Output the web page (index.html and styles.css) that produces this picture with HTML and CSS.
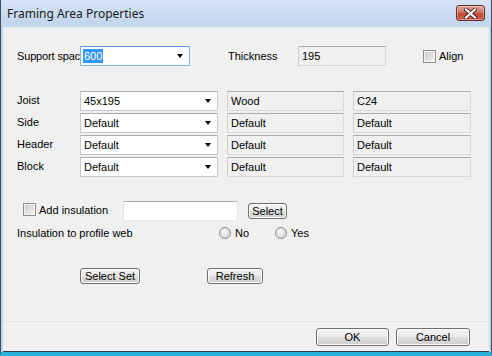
FILE: index.html
```html
<!DOCTYPE html>
<html lang="en">
<head>
  <meta charset="UTF-8" />
  <title>Framing Area Properties</title>
  <link rel="stylesheet" href="styles.css">
</head>
<body>

  <div class="window">
    <div class="titlebar">
      <span class="title">Framing Area Properties</span>
      <div class="close">
        <svg width="13" height="11" viewBox="0 0 13 11">
          <path d="M2 1.5L11 9.5M11 1.5L2 9.5" stroke="#4a2020" stroke-width="4" stroke-linecap="square"/>
          <path d="M2 1.5L11 9.5M11 1.5L2 9.5" stroke="#fff" stroke-width="2.2" stroke-linecap="square"/>
        </svg>
      </div>
    </div>

    <div class="client">
      <div class="form">

        <div class="row top-row">
          <span class="lbl first">Support spac</span>
          <div class="combo focus combo-short"><span class="sel">600</span><i class="arrow"></i></div>
          <span class="lbl thick">Thickness</span>
          <div class="box thick-box">195</div>
          <span class="cb align-cb"></span>
          <span class="lbl">Align</span>
        </div>

        <div class="grid">
          <span class="lbl">Joist</span>
          <div class="combo"><span>45x195</span><i class="arrow"></i></div>
          <div class="box">Wood</div>
          <div class="box">C24</div>

          <span class="lbl">Side</span>
          <div class="combo"><span>Default</span><i class="arrow"></i></div>
          <div class="box">Default</div>
          <div class="box">Default</div>

          <span class="lbl">Header</span>
          <div class="combo"><span>Default</span><i class="arrow"></i></div>
          <div class="box">Default</div>
          <div class="box">Default</div>

          <span class="lbl">Block</span>
          <div class="combo"><span>Default</span><i class="arrow"></i></div>
          <div class="box">Default</div>
          <div class="box">Default</div>
        </div>

        <div class="row ins-row">
          <span class="cb ins-cb"></span>
          <span class="lbl ins-lbl">Add insulation</span>
          <div class="edit"></div>
          <button class="btn select-btn">Select</button>
        </div>

        <div class="row web-row">
          <span class="lbl web-lbl">Insulation to profile web</span>
          <span class="radio-item no-item"><span class="radio"></span>No</span>
          <span class="radio-item"><span class="radio"></span>Yes</span>
        </div>

        <div class="row btn-row">
          <button class="btn set-btn">Select Set</button>
          <button class="btn refresh-btn">Refresh</button>
        </div>

      </div>

      <div class="footer">
        <button class="btn ok-btn">OK</button>
        <button class="btn cancel-btn">Cancel</button>
      </div>
    </div>
  </div>

</body>
</html>
```

FILE: styles.css
```css
* {
  box-sizing: border-box;
}

body {
  margin: 0;
  font-family: 'Liberation Sans', Arial, sans-serif;
  font-size: 11px;
  color: #000;
  background: #c0d3ec;
}

.window {
  width: 492px;
  height: 356px;
  display: flex;
  flex-direction: column;
  padding: 0 2px;
  border-left: 1px solid #3c4d63;
  border-right: 1px solid #3c4d63;
  border-bottom: 4px solid #29b3d9;
  background: linear-gradient(#d5e3f4, #c1d4ed 27px, #c1d4ed);
}

/* title bar */
.titlebar {
  height: 27px;
  display: flex;
  align-items: flex-start;
  flex-shrink: 0;
}

.title {
  font-family: 'Noto Sans', sans-serif;
  font-size: 12px;
  color: #1b1b1b;
  padding-left: 4px;
  line-height: 27px;
}

.close {
  margin-left: auto;
  margin-right: 4px;
  margin-top: 5px;
  width: 29px;
  height: 16px;
  border: 1px solid #6b2b2b;
  border-radius: 3px;
  background: linear-gradient(#e3a59b, #d0705f 50%, #c04a3a 51%, #c95a45);
  box-shadow: inset 0 0 0 1px rgba(255,255,255,0.35);
  display: flex;
  justify-content: center;
  align-items: center;
}

/* client area */
.client {
  flex: 1;
  display: flex;
  flex-direction: column;
  background: #f0f0f0;
  border-bottom: 1px solid #2c3a4c;
}

.form {
  flex: 1;
  padding: 19px 0 0 14px;
}

.row {
  display: flex;
  align-items: center;
}

.lbl {
  white-space: nowrap;
}

.top-row {
  height: 20px;
}

.first {
  width: 63px;
  letter-spacing: -0.15px;
}

.thick {
  margin-left: 38px;
  width: 70px;
}

.align-cb {
  margin-left: 37px;
  margin-right: 3px;
}

/* combos and boxes */
.combo {
  height: 20px;
  display: flex;
  align-items: center;
  padding: 0 6px 0 3px;
  background: #fff;
  border: 1px solid #c5c9d0;
  border-top-color: #abadb3;
}

.combo.focus {
  border-color: #7eb4ea;
  border-top-color: #569de5;
}

.combo-short {
  width: 110px;
}

.arrow {
  margin-left: auto;
  width: 1px;
  height: 0;
  border-left: 3px solid transparent;
  border-right: 3px solid transparent;
  border-top: 4px solid #000;
}

.sel {
  background: #3399ff;
  color: #fff;
  line-height: 14px;
  padding: 0 1px;
  margin-left: -1px;
}

.box {
  height: 20px;
  display: flex;
  align-items: center;
  padding-left: 3px;
  background: #f0f0f0;
  border: 1px solid #dadada;
  border-top-color: #adadad;
  border-left-color: #cfcfcf;
}

.thick-box {
  width: 88px;
}

.grid {
  margin-top: 25px;
  display: grid;
  grid-template-columns: 54px 138px 117px 118px;
  grid-auto-rows: 20px;
  column-gap: 9px;
  row-gap: 2px;
  align-items: center;
}

.grid .lbl {
  margin-top: -2px;
}

/* checkbox / radio */
.cb {
  width: 13px;
  height: 13px;
  border: 1px solid #8e8f8f;
  background: linear-gradient(135deg, #c8c8c8, #f6f6f6);
  box-shadow: inset 0 0 0 1px #f4f4f4;
  flex-shrink: 0;
}

.ins-row {
  margin-top: 24px;
  height: 20px;
}

.ins-cb {
  margin-left: 6px;
  margin-right: 3px;
  margin-top: -3px;
}

.ins-lbl {
  width: 84px;
  margin-top: -3px;
}

.edit {
  width: 115px;
  height: 20px;
  background: #fff;
  border: 1px solid #e3e9ef;
  border-top-color: #abadb3;
  border-left-color: #e2e3ea;
}

.web-row {
  margin-top: 5px;
  height: 13px;
}

.web-lbl {
  width: 202px;
}

.radio-item {
  display: flex;
  align-items: center;
  gap: 4px;
}

.no-item {
  width: 56px;
}

.radio {
  width: 12px;
  height: 12px;
  border-radius: 50%;
  border: 1px solid #8f8f8f;
  background: radial-gradient(circle at 40% 40%, #fafafa, #d6d6d6 70%, #c4c4c4);
}

/* buttons */
.btn {
  font-family: 'Liberation Sans', Arial, sans-serif;
  font-size: 11px;
  color: #000;
  padding: 0;
  border: 1px solid #707070;
  border-radius: 3px;
  background: linear-gradient(#f2f2f2 0%, #ebebeb 50%, #dddddd 51%, #cfcfcf 100%);
  box-shadow: inset 0 0 0 1px #fbfbfb;
  line-height: 1;
}

.select-btn {
  margin-left: 10px;
  width: 39px;
  height: 16px;
}

.btn-row {
  margin-top: 29px;
}

.set-btn {
  margin-left: 63px;
  width: 60px;
  height: 16px;
}

.refresh-btn {
  margin-left: 67px;
  width: 56px;
  height: 16px;
}

.footer {
  display: flex;
  justify-content: flex-end;
  gap: 7px;
  padding: 6px 19px 5px 0;
  border-top: 1px solid #dde4ec;
}

.ok-btn {
  width: 73px;
  height: 18px;
}

.cancel-btn {
  width: 74px;
  height: 18px;
}
```
